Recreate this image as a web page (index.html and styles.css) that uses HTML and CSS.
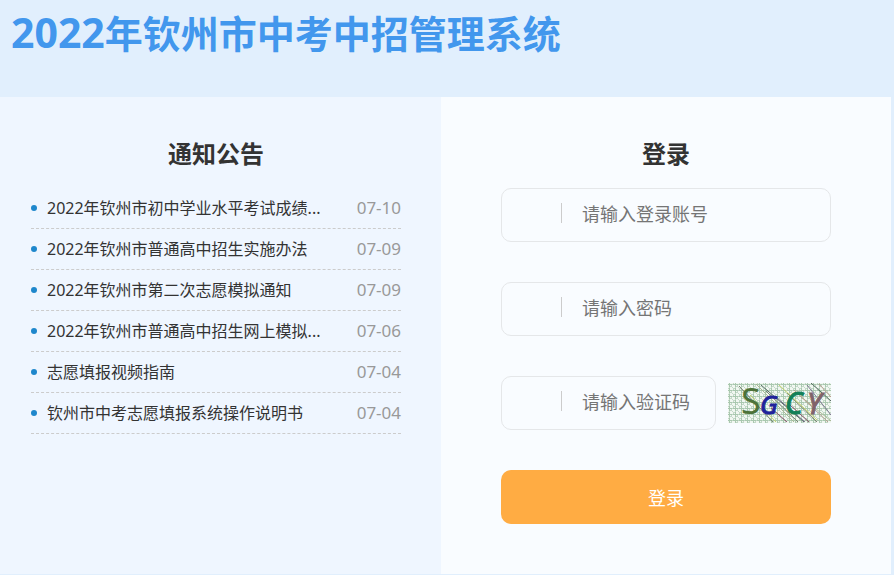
FILE: index.html
```html
<!DOCTYPE html>
<html lang="zh-CN">
<head>
    <meta charset="UTF-8">
    <meta name="viewport" content="width=device-width, initial-scale=1.0">
    <title>2022年钦州市中考中招管理系统</title>
    <link rel="stylesheet" href="styles.css">
</head>
<body>

    <header class="header">
        <h1><span class="year">2022</span>年钦州市中考中招管理系统</h1>
    </header>

    <main class="main">
        <section class="notice">
            <h2>通知公告</h2>
            <ul class="notice-list">
                <li><a href="#">2022年钦州市初中学业水平考试成绩...</a><time>07-10</time></li>
                <li><a href="#">2022年钦州市普通高中招生实施办法</a><time>07-09</time></li>
                <li><a href="#">2022年钦州市第二次志愿模拟通知</a><time>07-09</time></li>
                <li><a href="#">2022年钦州市普通高中招生网上模拟...</a><time>07-06</time></li>
                <li><a href="#">志愿填报视频指南</a><time>07-04</time></li>
                <li><a href="#">钦州市中考志愿填报系统操作说明书</a><time>07-04</time></li>
            </ul>
        </section>

        <section class="login">
            <h2>登录</h2>
            <form class="login-form">
                <div class="field">
                    <input type="text" name="username" placeholder="请输入登录账号" aria-label="登录账号">
                </div>
                <div class="field">
                    <input type="password" name="password" placeholder="请输入密码" aria-label="密码">
                </div>
                <div class="code-row">
                    <div class="field">
                        <input type="text" name="code" placeholder="请输入验证码" aria-label="验证码">
                    </div>
                    <svg class="captcha" width="103" height="40" viewBox="0 0 103 40" role="img" aria-label="验证码图片">
                        <defs>
                            <pattern id="grid" width="6" height="6" patternUnits="userSpaceOnUse">
                                <path d="M0 1.5h6M1.5 0v6" stroke="#a9c8af" stroke-width="1"/>
                                <path d="M0 6l6-6M3 3l3 3" stroke="#c3d8c8" stroke-width="1"/>
                            </pattern>
                        </defs>
                        <rect width="103" height="40" fill="#f1f7f1"/>
                        <rect width="103" height="40" fill="url(#grid)"/>
                        <g fill="none" stroke-width="1">
                            <path d="M11 3l34 36M38 8l32 31M59 10l30 29" stroke="#77806f"/>
                            <path d="M28 1l38 38M72 13l31 25" stroke="#a9b894"/>
                            <path d="M22 12l26 27M51 2l38 35" stroke="#c5d46c"/>
                            <path d="M33 2l43 37M83 0l20 18" stroke="#556b61"/>
                            <path d="M43 25l16 14M62 22l19 17" stroke="#884e69"/>
                            <path d="M48 14l29 25M79 2l24 30" stroke="#7d7791"/>
                            <path d="M66 7l34 32M91 1l12 13" stroke="#b99d91"/>
                        </g>
                        <text class="code-s" x="13" y="31">S</text>
                        <text class="code-g" x="32" y="31">G</text>
                        <text class="code-c" x="57" y="31">C</text>
                        <text class="code-y" x="79" y="31">Y</text>
                    </svg>
                </div>
                <button type="submit">登录</button>
            </form>
        </section>
    </main>

</body>
</html>
```
FILE: styles.css
```css
* {
    box-sizing: border-box;
}

body {
    margin: 0;
    padding-right: 3px;
    background-color: #e1effd;
    color: #333;
    font-family: "Noto Sans", "Noto Sans CJK SC", sans-serif;
    font-size: 16px;
}

h1, h2, ul {
    margin: 0;
    padding: 0;
}

.header {
    padding: 4px 11px 36px;
}

h1 {
    color: #4297ed;
    font-size: 38px;
    line-height: 56px;
}

.year {
    font-size: 41px;
}

.main {
    display: grid;
    grid-template-columns: 49.5% minmax(0, 1fr);
}

h2 {
    font-size: 24px;
    line-height: 34px;
    text-align: center;
    margin-bottom: 17px;
}

.notice {
    padding: 40px 40px 50px 31px;
    background-color: #eff6ff;
}

.login {
    padding: 40px 60px 50px;
    background-color: #f9fcff;
}

.notice-list {
    list-style: none;
}

.notice-list li {
    display: flex;
    align-items: center;
    height: 41px;
    border-bottom: 1px dashed #ccc;
}

.notice-list li::before {
    content: "";
    width: 6px;
    height: 6px;
    margin-right: 10px;
    border-radius: 50%;
    background-color: #1e87cc;
}

.notice-list a {
    color: #333;
    line-height: 40px;
    text-decoration: none;
    white-space: nowrap;
}

.notice-list time {
    margin-left: auto;
    color: #999;
    font-size: 17px;
    line-height: 40px;
}

.login-form {
    display: flex;
    flex-direction: column;
    gap: 40px;
}

.field {
    display: flex;
    align-items: flex-start;
    min-width: 0;
    height: 54px;
    border: 1px solid #e5e7e9;
    border-radius: 10px;
}

.field::before {
    content: "";
    flex: none;
    width: 1px;
    height: 20px;
    margin: 14px 20px 0 59px;
    background-color: #ccc;
}

.field input {
    flex: 1;
    min-width: 0;
    height: 50px;
    padding: 0;
    border: none;
    outline: none;
    background: none;
    color: #333;
    font-family: inherit;
    font-size: 18px;
}

.field input::placeholder {
    color: #757575;
}

.code-row {
    display: flex;
    align-items: center;
    gap: 12px;
}

.code-row .field {
    flex: 1;
}

.captcha {
    flex: none;
    font-family: "Noto Sans", sans-serif;
}

.code-s {
    fill: #4d7339;
    font-size: 36px;
}

.code-g {
    fill: #20229b;
    stroke: #20229b;
    font-size: 26px;
    font-style: italic;
}

.code-c {
    fill: #128058;
    stroke: #128058;
    font-size: 30px;
    font-style: italic;
}

.code-y {
    fill: #80636a;
    stroke: #80636a;
    font-size: 29px;
    font-style: italic;
}

button {
    height: 54px;
    border: none;
    border-radius: 10px;
    background-color: #ffac43;
    color: #fff;
    font-family: inherit;
    font-size: 18px;
    cursor: pointer;
}
```
